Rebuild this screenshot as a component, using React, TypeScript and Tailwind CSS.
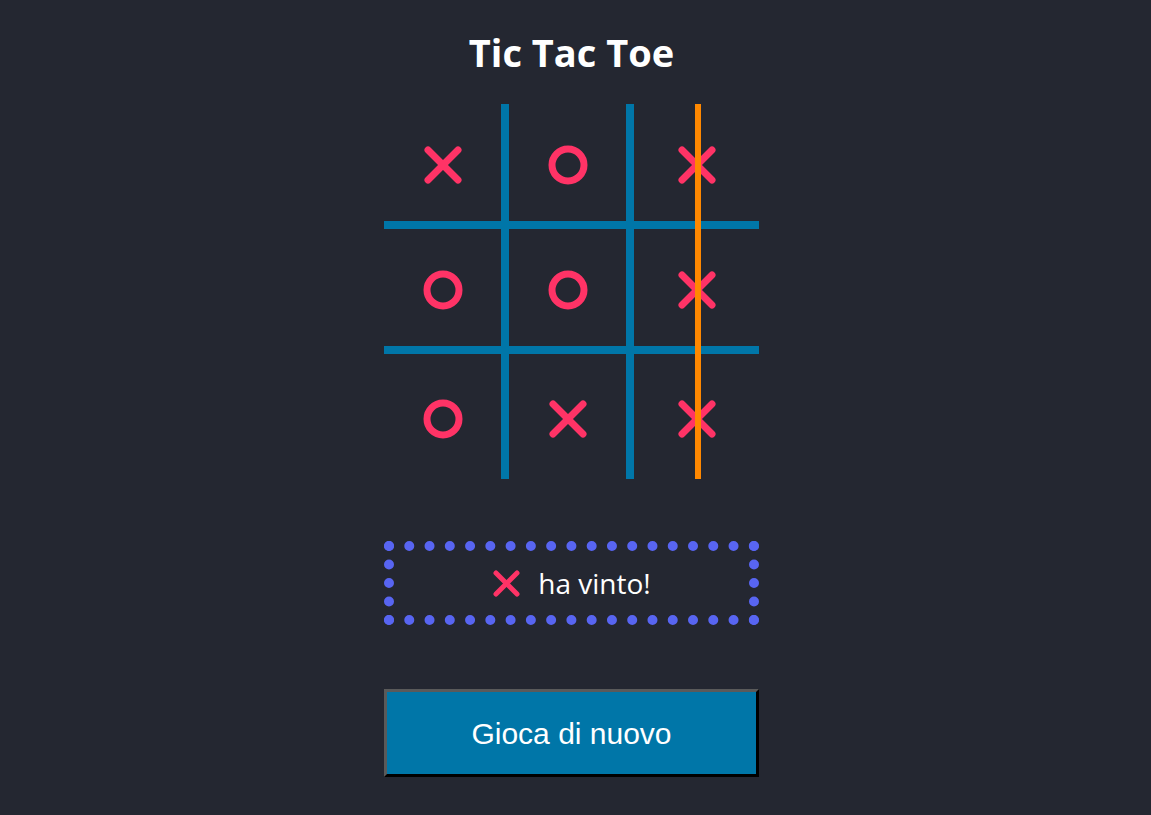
type Mark = "X" | "O";

const board: Mark[] = ["X", "O", "X", "O", "O", "X", "O", "X", "X"];

function XMark({ size = 40, stroke = 7 }: { size?: number; stroke?: number }) {
  const p = stroke / 2 + 1.5;
  return (
    <svg width={size} height={size} viewBox={`0 0 ${size} ${size}`} fill="none">
      <line x1={p} y1={p} x2={size - p} y2={size - p} stroke="#ff3366" strokeWidth={stroke} strokeLinecap="round" />
      <line x1={size - p} y1={p} x2={p} y2={size - p} stroke="#ff3366" strokeWidth={stroke} strokeLinecap="round" />
    </svg>
  );
}

function OMark() {
  return (
    <svg width={40} height={40} viewBox="0 0 40 40" fill="none">
      <circle cx="20" cy="20" r="16" stroke="#ff3366" strokeWidth="7" />
    </svg>
  );
}

export default function App() {
  return (
    <div className="min-h-screen bg-[#242731] pr-2 flex flex-col items-center font-['Open_Sans',sans-serif] text-white">
      <h1 className="mt-[26px] text-[38px] leading-[52px] font-bold">Tic Tac Toe</h1>

      {/* Board — cell borders draw the grid */}
      <div className="relative mt-[26px] grid grid-cols-3 w-[375px]">
        {board.map((m, i) => {
          const col = i % 3;
          const row = Math.floor(i / 3);
          return (
            <div
              key={i}
              className={`h-[125px] flex items-center justify-center border-[#0076a8] ${col < 2 ? "border-r-8" : ""} ${row < 2 ? "border-b-8" : ""}`}
            >
              <div className="mt-1">{m === "X" ? <XMark /> : <OMark />}</div>
            </div>
          );
        })}
        {/* winning line */}
        <div className="absolute top-0 bottom-0 left-[311px] w-[6px] bg-[#ff8800]" />
      </div>

      <div className="mt-[62px] w-[375px] h-[84px] border-[10px] border-dotted border-[#5865f2] flex items-center justify-center gap-[17px]">
        <XMark size={29} stroke={5} />
        <span className="text-[28px] leading-none">ha vinto!</span>
      </div>

      <button className="mt-[64px] w-[375px] h-[88px] bg-[#0076a8] border-[3px] border-t-[#5a5a5a] border-l-[#5a5a5a] border-r-black border-b-black font-['Liberation_Sans',sans-serif] text-[30px] text-white">
        Gioca di nuovo
      </button>
    </div>
  );
}
